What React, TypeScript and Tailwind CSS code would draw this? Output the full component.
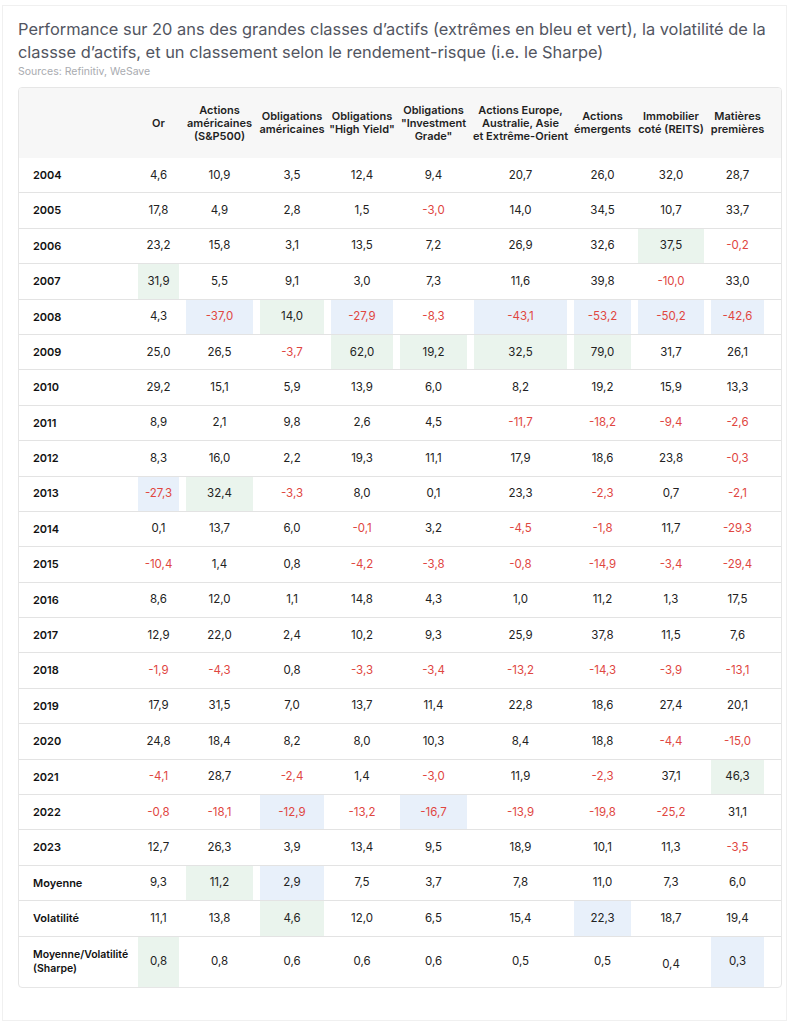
const columns = [
  ["Or"],
  ["Actions", "américaines", "(S&P500)"],
  ["Obligations", "américaines"],
  ["Obligations", "\"High Yield\""],
  ["Obligations", "\"Investment", "Grade\""],
  ["Actions Europe,", "Australie, Asie", "et Extrême-Orient"],
  ["Actions", "émergents"],
  ["Immobilier", "coté (REITS)"],
  ["Matières", "premières"],
];

// g = plus haut (vert), b = plus bas (bleu)
const rows: { label: string; values: string[] }[] = [
  { label: "2004", values: ["4,6", "10,9", "3,5", "12,4", "9,4", "20,7", "26,0", "32,0", "28,7"] },
  { label: "2005", values: ["17,8", "4,9", "2,8", "1,5", "-3,0", "14,0", "34,5", "10,7", "33,7"] },
  { label: "2006", values: ["23,2", "15,8", "3,1", "13,5", "7,2", "26,9", "32,6", "37,5g", "-0,2"] },
  { label: "2007", values: ["31,9g", "5,5", "9,1", "3,0", "7,3", "11,6", "39,8", "-10,0", "33,0"] },
  { label: "2008", values: ["4,3", "-37,0b", "14,0g", "-27,9b", "-8,3", "-43,1b", "-53,2b", "-50,2b", "-42,6b"] },
  { label: "2009", values: ["25,0", "26,5", "-3,7", "62,0g", "19,2g", "32,5g", "79,0g", "31,7", "26,1"] },
  { label: "2010", values: ["29,2", "15,1", "5,9", "13,9", "6,0", "8,2", "19,2", "15,9", "13,3"] },
  { label: "2011", values: ["8,9", "2,1", "9,8", "2,6", "4,5", "-11,7", "-18,2", "-9,4", "-2,6"] },
  { label: "2012", values: ["8,3", "16,0", "2,2", "19,3", "11,1", "17,9", "18,6", "23,8", "-0,3"] },
  { label: "2013", values: ["-27,3b", "32,4g", "-3,3", "8,0", "0,1", "23,3", "-2,3", "0,7", "-2,1"] },
  { label: "2014", values: ["0,1", "13,7", "6,0", "-0,1", "3,2", "-4,5", "-1,8", "11,7", "-29,3"] },
  { label: "2015", values: ["-10,4", "1,4", "0,8", "-4,2", "-3,8", "-0,8", "-14,9", "-3,4", "-29,4"] },
  { label: "2016", values: ["8,6", "12,0", "1,1", "14,8", "4,3", "1,0", "11,2", "1,3", "17,5"] },
  { label: "2017", values: ["12,9", "22,0", "2,4", "10,2", "9,3", "25,9", "37,8", "11,5", "7,6"] },
  { label: "2018", values: ["-1,9", "-4,3", "0,8", "-3,3", "-3,4", "-13,2", "-14,3", "-3,9", "-13,1"] },
  { label: "2019", values: ["17,9", "31,5", "7,0", "13,7", "11,4", "22,8", "18,6", "27,4", "20,1"] },
  { label: "2020", values: ["24,8", "18,4", "8,2", "8,0", "10,3", "8,4", "18,8", "-4,4", "-15,0"] },
  { label: "2021", values: ["-4,1", "28,7", "-2,4", "1,4", "-3,0", "11,9", "-2,3", "37,1", "46,3g"] },
  { label: "2022", values: ["-0,8", "-18,1", "-12,9b", "-13,2", "-16,7b", "-13,9", "-19,8", "-25,2", "31,1"] },
  { label: "2023", values: ["12,7", "26,3", "3,9", "13,4", "9,5", "18,9", "10,1", "11,3", "-3,5"] },
  { label: "Moyenne", values: ["9,3", "11,2g", "2,9b", "7,5", "3,7", "7,8", "11,0", "7,3", "6,0"] },
  { label: "Volatilité", values: ["11,1", "13,8", "4,6g", "12,0", "6,5", "15,4", "22,3b", "18,7", "19,4"] },
];

const sharpe = ["0,8g", "0,8", "0,6", "0,6", "0,6", "0,5", "0,5", "0,4", "0,3b"];

const grid =
  "grid grid-cols-[98px_41px_67px_64px_62px_67px_93px_57px_66px_53px] gap-x-[7px] pl-[14px]";

function Cell({ raw, low }: { raw: string; low?: boolean }) {
  const tag = raw.slice(-1);
  const value = tag === "g" || tag === "b" ? raw.slice(0, -1) : raw;
  const negative = value.startsWith("-");
  return (
    <div
      className={
        "flex items-center justify-center text-[11.5px] " +
        (tag === "g" ? "bg-[#eaf4ed] " : tag === "b" ? "bg-[#e8f0fa] " : "") +
        (negative ? "text-[#e0463f]" : "text-[#222222]") +
        (low ? " pt-[7px]" : "")
      }
    >
      {value}
    </div>
  );
}

export default function App() {
  return (
    <div className="w-[797px] h-[1024px] bg-white pt-[5px] pl-[2px]" style={{ fontFamily: "Inter, 'Noto Sans', sans-serif" }}>
      <div className="w-[785px] h-[1016px] border border-[#f0f0f0] pl-[15px] pt-[12px]">
        <h1 className="text-[16.4px] leading-[23px] text-[#525561] font-normal whitespace-nowrap">
          Performance sur 20 ans des grandes classes d’actifs (extrêmes en bleu et vert), la volatilité de la
          <br />
          classse d’actifs, et un classement selon le rendement-risque (i.e. le Sharpe)
        </h1>
        <p className="mt-[1px] text-[10.5px] leading-[14px] text-[#a9abb0]">Sources: Refinitiv, WeSave</p>

        <div className="mt-[8px] w-[764px] border border-[#e6e6e6] rounded-[4px] overflow-hidden">
          <div className={grid + " h-[70px] bg-[#f7f7f7]"}>
            <div />
            {columns.map((lines, i) => (
              <div key={i} className="flex flex-col items-center justify-center text-center text-[11px] leading-[13px] font-semibold text-[#1f1f1f] whitespace-nowrap">
                {lines.map((l) => (
                  <span key={l}>{l}</span>
                ))}
              </div>
            ))}
          </div>

          {rows.map((row) => (
            <div key={row.label} className={grid + " h-[35.4px] border-b border-[#e3e3e3]"}>
              <div className="flex items-center text-[11px] font-semibold text-[#111111]">{row.label}</div>
              {row.values.map((v, i) => (
                <Cell key={i} raw={v} />
              ))}
            </div>
          ))}

          <div className={grid + " h-[50px]"}>
            <div className="flex flex-col justify-center text-[10.5px] leading-[14px] font-semibold text-[#111111] whitespace-nowrap">
              <span>Moyenne/Volatilité</span>
              <span>(Sharpe)</span>
            </div>
            {sharpe.map((v, i) => (
              <Cell key={i} raw={v} low={i === 7} />
            ))}
          </div>
        </div>
      </div>
    </div>
  );
}
